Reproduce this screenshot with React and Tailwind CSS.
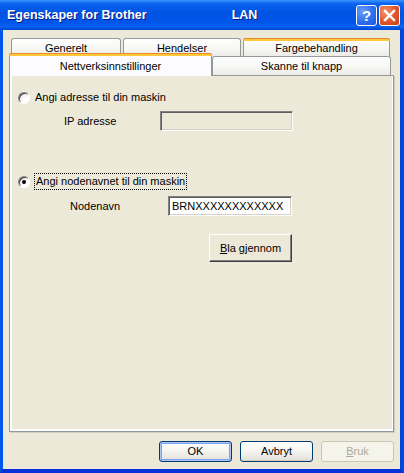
import React from 'react'

function Tab({ children, className = '', hot = false }) {
  return (
    <div className={`relative flex items-center justify-center rounded-t-[3px] border border-b-0 border-[#919B9C] bg-[linear-gradient(180deg,#ffffff_0%,#f6f6f3_60%,#ecebe6_100%)] ${className}`}>
      {hot && <div className="absolute -left-px -right-px -top-px h-[3px] rounded-t-[3px] bg-[#FFC83C] border-t border-[#E68B2C]" />}
      <span className="pt-[1px]">{children}</span>
    </div>
  )
}

function Radio({ checked }) {
  return (
    <div className="w-[12px] h-[12px] rounded-full border border-t-[#808080] border-l-[#808080] border-b-white border-r-white shadow-[inset_1px_1px_0_#404040] bg-[linear-gradient(135deg,#e6e6e0_0%,#ffffff_70%)] flex items-center justify-center shrink-0">
      {checked && <div className="w-[4px] h-[4px] rounded-full bg-black" />}
    </div>
  )
}

function XpButton({ children, isDefault = false, disabled = false }) {
  const base = 'w-[73px] h-[21px] rounded-[3px] border flex items-center justify-center text-[11px]'
  if (disabled) {
    return <div className={`${base} border-[#C9C7BA] bg-[#F5F4EA] text-[#ACA899]`}>{children}</div>
  }
  return (
    <div className={`${base} border-[#003C74] bg-[linear-gradient(180deg,#ffffff_0%,#f4f4f0_50%,#e6e4dc_90%,#d6d0c5_100%)] ${isDefault ? 'shadow-[inset_0_0_0_1px_#a9c4f5,inset_0_0_0_2px_#7fa2ec]' : 'shadow-[inset_0_-1px_0_#d6d0c5]'}`}>
      {children}
    </div>
  )
}

export default function App() {
  return (
    <div className="w-[404px] h-[473px] flex flex-col overflow-hidden font-['Liberation_Sans',Arial,sans-serif] text-[11px] text-black">
      {/* title bar */}
      <div className="h-[30px] shrink-0 flex items-center pl-[7px] pr-[4px] bg-[linear-gradient(180deg,#3d95ff_0%,#0a64f0_12%,#0054e3_40%,#0055e8_75%,#0b62f4_88%,#0046d0_100%)]">
        <span className="text-white font-bold text-[12.5px] [text-shadow:1px_1px_0_#0a1883]">Egenskaper for Brother</span>
        <span className="ml-[85px] text-white font-bold text-[12.5px] [text-shadow:1px_1px_0_#0a1883]">LAN</span>
        <div className="ml-auto flex gap-[2px] mt-[1px]">
          <div className="w-[21px] h-[21px] rounded-[3px] border border-white bg-[radial-gradient(circle_at_30%_30%,#6d9ff8_0%,#2d6ff0_55%,#1e55d6_100%)] flex items-center justify-center text-white font-bold text-[15px] leading-none">?</div>
          <div className="w-[21px] h-[21px] rounded-[3px] border border-white bg-[radial-gradient(circle_at_30%_30%,#f2946e_0%,#e0542a_55%,#c8401c_100%)] flex items-center justify-center">
            <svg width="13" height="13" viewBox="0 0 13 13">
              <path d="M2 2 L11 11 M11 2 L2 11" stroke="white" strokeWidth="2.4" strokeLinecap="square" />
            </svg>
          </div>
        </div>
      </div>

      {/* body */}
      <div className="flex-1 flex flex-col bg-[#ECE9D8] border-l-[3px] border-r-[4px] border-b-[4px] border-l-[#0055EA] border-r-[#0046D8] border-b-[#0831D9]">
        <div className="pt-[8px] pl-[6px]">
          <div className="flex gap-[2px] pl-[2px] h-[18px]">
            <Tab className="w-[110px]">Generelt</Tab>
            <Tab className="w-[118px]">Hendelser</Tab>
            <Tab className="w-[147px]" hot>Fargebehandling</Tab>
          </div>
          <div className="flex items-end mt-[-3px]">
            <div className="relative z-10 w-[203px] h-[23px] mb-[-1px] rounded-t-[3px] border border-b-0 border-[#919B9C] bg-[#FCFCFE] flex justify-center pt-[4px]">
              <div className="absolute -left-px -right-px -top-px h-[3px] rounded-t-[3px] bg-[#FFC83C] border-t border-[#E68B2C]" />
              <span>Nettverksinnstillinger</span>
            </div>
            <Tab className="w-[179px] h-[19px]">Skanne til knapp</Tab>
          </div>

          {/* panel */}
          <div className="w-[385px] h-[357px] border border-[#919B9C] bg-[#FCFCFE] pl-[2px] pr-[1px] pb-[2px] shadow-[1px_1px_0_#d0cebf]">
            <div className="h-full bg-[#ECE9D8] pl-[6px] pt-[15px]">
              <div className="flex items-center gap-[5px] h-[13px]">
                <Radio />
                <span>Angi adresse til din maskin</span>
              </div>
              <div className="flex items-center mt-[7px] ml-[46px]">
                <span className="w-[96px]">IP adresse</span>
                <div className="w-[133px] h-[20px] border border-t-[#808080] border-l-[#808080] border-b-white border-r-white shadow-[inset_1px_1px_0_#5f5f5f,inset_-1px_-1px_0_#d4d0c8] bg-[#ECE9D8]" />
              </div>

              <div className="flex items-center gap-[4px] h-[17px] mt-[42px]">
                <Radio checked />
                <span className="border border-dotted border-black px-px leading-[15px]">Angi nodenavnet til din maskin</span>
              </div>
              <div className="flex items-center mt-[6px] ml-[52px]">
                <span className="w-[98px]">Nodenavn</span>
                <div className="w-[124px] h-[20px] border border-t-[#808080] border-l-[#808080] border-b-white border-r-white shadow-[inset_1px_1px_0_#5f5f5f,inset_-1px_-1px_0_#d4d0c8] bg-white flex items-center pl-[3px]">
                  BRNXXXXXXXXXXXX
                </div>
              </div>

              <div className="mt-[18px] ml-[191px] w-[83px] h-[28px] border border-t-white border-l-white border-b-[#404040] border-r-[#404040] shadow-[inset_-1px_-1px_0_#808080] bg-[#ECE9D8] flex items-center justify-center">
                <span><span className="underline">B</span>la gjennom</span>
              </div>
            </div>
          </div>
        </div>

        <div className="flex justify-end gap-[8px] pr-[6px] mt-[9px]">
          <XpButton isDefault>OK</XpButton>
          <XpButton>Avbryt</XpButton>
          <XpButton disabled><span><span className="underline">B</span>ruk</span></XpButton>
        </div>
      </div>
    </div>
  )
}
